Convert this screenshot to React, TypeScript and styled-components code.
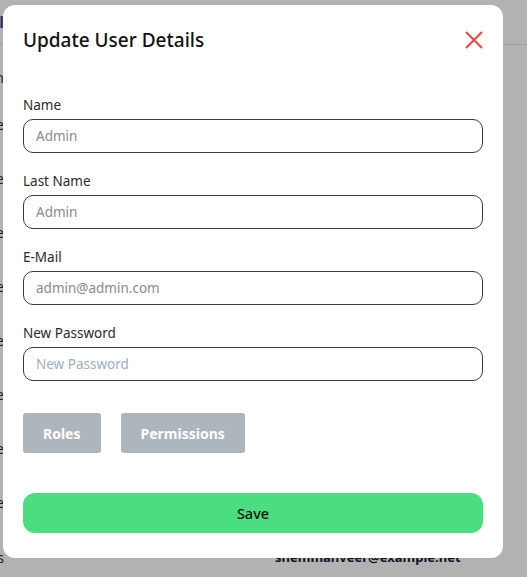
import React from "react";
import styled, { createGlobalStyle } from "styled-components";

const Global = createGlobalStyle`
  html, body { margin: 0; padding: 0; background: #ffffff; }
  body { font-family: "Noto Sans", "Open Sans", sans-serif; overflow: hidden; }
  * { box-sizing: border-box; }
`;

/* ---------- background page (dimmed behind the modal) ---------- */
const Page = styled.div`
  width: 527px;
  height: 577px;
  overflow: hidden;
  background: #ffffff;
`;

const Nav = styled.div`
  height: 45px;
  border-bottom: 1px solid #e2e2e2;
  display: flex;
  align-items: center;
`;

const ClipCell = styled.div`
  width: 4px;
  display: flex;
  justify-content: flex-end;
  white-space: nowrap;
  font-size: 14px;
  color: #2b2b3a;
`;

const Brand = styled(ClipCell)`
  font-size: 16px;
  font-weight: 700;
  color: #3e4c9a;
`;

const Table = styled.div`
  display: flex;
  flex-direction: column;
  padding-top: 12px;
`;

const HeadRow = styled.div`
  height: 40px;
  display: flex;
  align-items: center;
`;

const Row = styled.div`
  height: 54px;
  display: grid;
  grid-template-columns: 4px 1fr;
  align-items: center;
`;

const LastRow = styled(Row)`
  padding-top: 2px;
`;

const Email = styled.div`
  padding-left: 271px;
  font-size: 13px;
  font-weight: 700;
  color: #1c1c3a;
  white-space: nowrap;
`;

/* ---------- overlay & modal ---------- */
const Overlay = styled.div`
  position: fixed;
  inset: 0;
  background: rgba(0, 0, 0, 0.3);
  display: flex;
  align-items: flex-start;
  padding: 5px 0 0 3px;
`;

const Modal = styled.div`
  width: 500px;
  height: 553px;
  background: #ffffff;
  border-radius: 12px;
  padding: 20px 20px 25px;
  display: flex;
  flex-direction: column;
  & > * { flex-shrink: 0; }
`;

const Header = styled.div`
  height: 30px;
  display: flex;
  align-items: center;
  justify-content: space-between;
  margin-bottom: 40px;
`;

const Title = styled.h2`
  margin: 0;
  font-size: 19px;
  font-weight: 500;
  line-height: 30px;
  color: #111111;
`;

const CloseButton = styled.button`
  border: none;
  background: none;
  padding: 0;
  margin-right: -1px;
  width: 20px;
  height: 20px;
  display: flex;
  align-items: center;
  justify-content: center;
  cursor: pointer;
`;

const Form = styled.div`
  display: flex;
  flex-direction: column;
  gap: 18px;
`;

const Field = styled.div`
  display: flex;
  flex-direction: column;
`;

const Label = styled.label`
  font-size: 13.5px;
  line-height: 20px;
  color: #2a2a2a;
  margin-bottom: 4px;
`;

const Input = styled.input<{ $tone?: "gray" | "slate" }>`
  height: 34px;
  width: 100%;
  border: 1px solid #3a3a3a;
  border-radius: 10px;
  padding: 0 12px;
  font-family: inherit;
  font-size: 13.5px;
  color: #222;
  background: #fff;
  outline: none;
  &::placeholder {
    color: ${(p) => (p.$tone === "slate" ? "#a0aec0" : "#8a8a8a")};
    opacity: 1;
  }
`;

const ButtonRow = styled.div`
  display: flex;
  gap: 20px;
  margin-top: 32px;
`;

const TabButton = styled.button`
  height: 40px;
  padding: 0 20px;
  border: none;
  border-radius: 3px;
  background: #adb5bd;
  color: #ffffff;
  font-family: inherit;
  font-size: 14px;
  font-weight: 700;
  cursor: pointer;
`;

const SaveButton = styled.button`
  margin-top: 40px;
  height: 40px;
  width: 100%;
  border: none;
  border-radius: 12px;
  background: #4ade80;
  color: #111111;
  font-family: inherit;
  font-size: 14.5px;
  font-weight: 500;
  cursor: pointer;
`;

const rows = ["Name", "Role", "Name", "Role", "Name", "Role", "Name", "Role"];

const fields: { label: string; placeholder: string; tone?: "gray" | "slate"; type?: string }[] = [
  { label: "Name", placeholder: "Admin" },
  { label: "Last Name", placeholder: "Admin" },
  { label: "E-Mail", placeholder: "admin@admin.com" },
  { label: "New Password", placeholder: "New Password", tone: "slate", type: "password" },
];

export default function App() {
  return (
    <>
      <Global />
      <Page>
        <Nav>
          <Brand>Panel</Brand>
        </Nav>
        <Table>
          <HeadRow>
            <ClipCell>Action</ClipCell>
          </HeadRow>
          {rows.map((r, i) => (
            <Row key={i}>
              <ClipCell>{r}</ClipCell>
              <Email>shemmanveer@example.net</Email>
            </Row>
          ))}
          <LastRow>
            <ClipCell>Users</ClipCell>
            <Email>shemmanveer@example.net</Email>
          </LastRow>
        </Table>
      </Page>
      <Overlay>
        <Modal>
          <Header>
            <Title>Update User Details</Title>
            <CloseButton aria-label="Close">
              <svg width="18" height="18" viewBox="0 0 18 18">
                <path d="M1 1 L17 17 M17 1 L1 17" stroke="#ef4444" strokeWidth="2" strokeLinecap="butt" />
              </svg>
            </CloseButton>
          </Header>
          <Form>
            {fields.map((f) => (
              <Field key={f.label}>
                <Label>{f.label}</Label>
                <Input placeholder={f.placeholder} $tone={f.tone} type={f.type ?? "text"} />
              </Field>
            ))}
          </Form>
          <ButtonRow>
            <TabButton>Roles</TabButton>
            <TabButton>Permissions</TabButton>
          </ButtonRow>
          <SaveButton>Save</SaveButton>
        </Modal>
      </Overlay>
    </>
  );
}
